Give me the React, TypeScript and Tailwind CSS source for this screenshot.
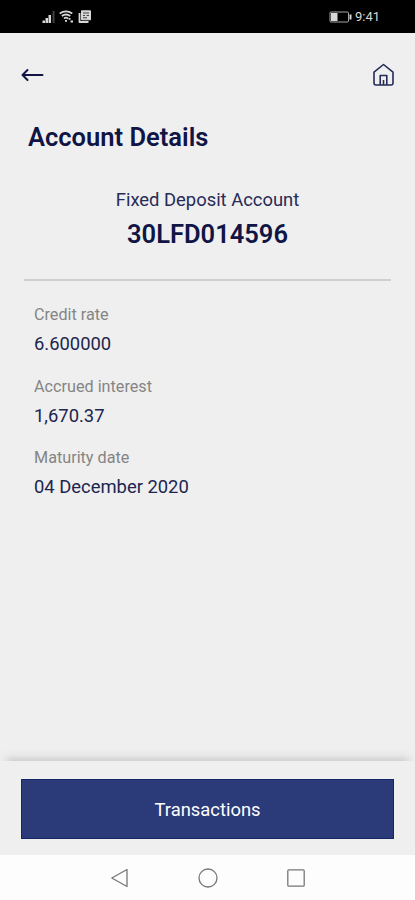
const details = [
  { label: "Credit rate", value: "6.600000" },
  { label: "Accrued interest", value: "1,670.37" },
  { label: "Maturity date", value: "04 December 2020" },
];

function StatusBar() {
  return (
    <div className="h-[33px] shrink-0 bg-black flex items-center justify-between pl-[42px] pr-[35px] text-[#d8d8d8]">
      <div className="flex items-center gap-1">
        {/* Signal */}
        <svg width="13" height="13" viewBox="0 0 13 13" fill="currentColor">
          <path d="M.5 10.500h2.500V13H.5zM3.500 8h2.500v5H3.500zM6.500 5H9v8H6.500z" />
          <path d="M10.500 1h2v12h-2z" opacity="0.3" />
        </svg>
        {/* Wifi */}
        <svg width="15" height="13" viewBox="0 0 15 13" fill="none" stroke="currentColor" strokeWidth="1.800">
          <path d="M.7 3.500Q7 -.8 13.300 3.500M2.800 6Q7 3 11.200 6M5 8.400Q7 7 9 8.400" />
          <path d="M6 10.800h2M9.500 8.800h2M11.500 11.500h2.500" />
        </svg>
        {/* News */}
        <svg width="14" height="13" viewBox="0 0 14 13" fill="none">
          <path d="M3.500 .8h9v9h-9z" fill="currentColor" stroke="currentColor" strokeLinejoin="round" />
          <path d="M1.500 3v9h9" stroke="currentColor" strokeWidth="1.800" strokeLinejoin="round" />
          <path d="M5 3h6M5 5.500h2M8.500 5.500H11M5 7.800h4" stroke="#444" />
        </svg>
      </div>
      <div className="flex items-center gap-[3px]">
        <svg width="23" height="12" viewBox="0 0 23 12" fill="none">
          <rect x="1" y="1" width="18.500" height="10" rx="1" stroke="#a5a5a5" />
          <path d="M2 2h6.500v8H2z" fill="currentColor" />
          <path d="M21.500 3.500v5" stroke="currentColor" strokeWidth="2" />
        </svg>
        <span className="text-[13px] leading-none">9:41</span>
      </div>
    </div>
  );
}

function Header() {
  return (
    <header className="h-[84px] shrink-0 flex items-center justify-between pl-[21px] pr-[20px] text-[#101545]">
      <button aria-label="Back">
        <svg width="23" height="14" viewBox="0 0 23 14" fill="none" stroke="currentColor" strokeWidth="2" strokeLinecap="round" strokeLinejoin="round">
          <path d="M21.500 7h-20M6.500 2L1.500 7l5 5" />
        </svg>
      </button>
      <button aria-label="Home">
        <svg width="23" height="24" viewBox="0 0 23 24" fill="none" stroke="#252b58" strokeWidth="1.600" strokeLinejoin="round">
          <path d="M2 9.200L11.500 1.500 21 9.200V20a2 2 0 0 1-2 2H4a2 2 0 0 1-2-2z" />
          <path d="M8.200 22V12.500h6.600V22M11.500 17v5" />
        </svg>
      </button>
    </header>
  );
}

export default function App() {
  return (
    <div className="h-[900px] w-full flex flex-col bg-[#efefef] font-['Roboto',sans-serif] text-[#101545]">
      <StatusBar />
      <Header />

      <main className="flex-1">
        <h1 className="pl-7 h-10 text-[25.500px] leading-10 font-semibold">Account Details</h1>

        <section className="mx-6 mt-[30px] h-[94px] border-b-2 border-[#cfcfcf] text-center">
          <p className="text-[18.400px] leading-[26px] text-[#272b56]">Fixed Deposit Account</p>
          <p className="mt-1 text-[25.500px] leading-[34px] font-semibold">30LFD014596</p>
        </section>

        <dl className="pl-[34px] pt-[21px]">
          {details.map((item) => (
            <div key={item.label} className="h-[71.500px]">
              <dt className="pt-px text-[16.200px] leading-6 text-[#858585]">{item.label}</dt>
              <dd className="mt-[3px] text-[18.400px] leading-[28px] text-[#20254f]">{item.value}</dd>
            </div>
          ))}
        </dl>
      </main>

      <div className="h-3 shrink-0 bg-linear-to-b from-[#efefef] via-[#e8e8e8] to-[#d2d2d2] mask-x-from-97% mask-x-to-100%" />
      <footer className="h-[94px] shrink-0 px-[21px] pt-[18px]">
        <button className="block w-full h-[60px] pt-[2px] bg-[#2b3a78] border border-[#152568] text-white text-[18.400px]">
          Transactions
        </button>
      </footer>

      {/* Android navigation */}
      <nav className="h-[45px] shrink-0 bg-[#fdfdfd] flex items-center justify-center gap-[68px] text-[#777]">
        <svg width="20" height="20" viewBox="0 0 20 20" fill="none" stroke="currentColor" strokeWidth="1.300" strokeLinejoin="round">
          <path d="M17 1.500v17L1.800 10z" />
        </svg>
        <svg width="20" height="20" viewBox="0 0 20 20" fill="none" stroke="currentColor" strokeWidth="1.300">
          <circle cx="10" cy="10" r="9" />
        </svg>
        <svg width="20" height="20" viewBox="0 0 20 20" fill="none" stroke="currentColor" strokeWidth="1.300">
          <rect x="1.800" y="1.800" width="16.400" height="16.400" rx="1" />
        </svg>
      </nav>
    </div>
  );
}
